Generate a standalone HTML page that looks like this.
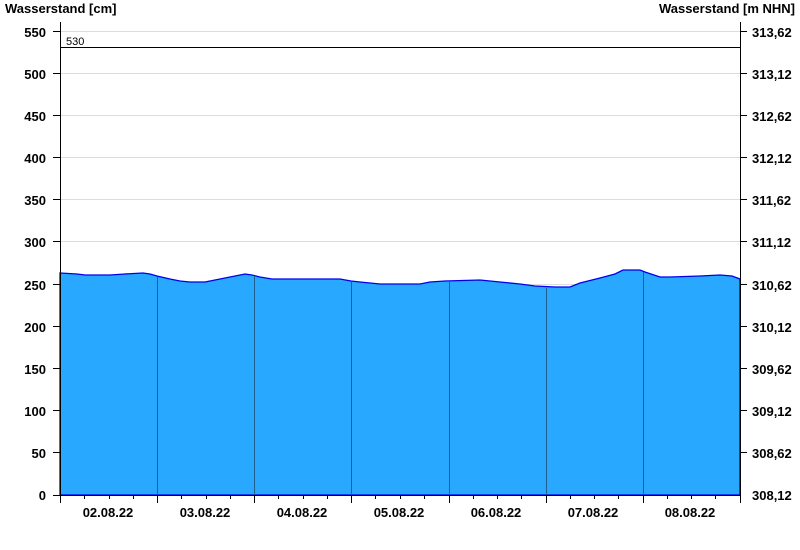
<!DOCTYPE html><html><head><style>body{margin:0;background:#fff}svg{display:block}text{font-family:"Liberation Sans",Arial,sans-serif;font-size:13px;font-weight:bold;fill:#000}</style></head><body>
<svg width="800" height="550" xmlns="http://www.w3.org/2000/svg">
<text x="5" y="13">Wasserstand [cm]</text>
<text x="795" y="13" text-anchor="end">Wasserstand [m NHN]</text>
<g stroke="#ddd" stroke-width="1">
<line x1="60" x2="740" y1="452.5" y2="452.5"/><line x1="60" x2="740" y1="410.5" y2="410.5"/><line x1="60" x2="740" y1="368.5" y2="368.5"/><line x1="60" x2="740" y1="326.5" y2="326.5"/><line x1="60" x2="740" y1="284.5" y2="284.5"/><line x1="60" x2="740" y1="241.5" y2="241.5"/><line x1="60" x2="740" y1="199.5" y2="199.5"/><line x1="60" x2="740" y1="157.5" y2="157.5"/><line x1="60" x2="740" y1="115.5" y2="115.5"/><line x1="60" x2="740" y1="73.5" y2="73.5"/><line x1="60" x2="740" y1="31.5" y2="31.5"/>
</g>
<path d="M60,273 L77,274 L85,275 L110,275 L125,274 L143,273 L150,274 L157,276 L170,279 L180,281 L190,282 L205,282 L215,280 L230,277 L245,274 L252,275 L260,277 L272,279 L340,279 L351,281 L360,282 L380,284 L420,284 L430,282 L445,281 L480,280 L500,282 L520,284 L535,286 L555,287 L570,287 L580,283 L600,278 L615,274 L623,270 L640,270 L645,272 L660,277 L670,277 L700,276 L720,275 L732,276 L740,279 L740,495 L60,495 Z" fill="#29a8ff" stroke="#0000ee" stroke-width="1.3"/>
<g stroke="#1d5f8f" stroke-width="1">
<line x1="157.5" x2="157.5" y1="277" y2="495"/><line x1="254.5" x2="254.5" y1="276" y2="495"/><line x1="351.5" x2="351.5" y1="282" y2="495"/><line x1="449.5" x2="449.5" y1="282" y2="495"/><line x1="546.5" x2="546.5" y1="288" y2="495"/><line x1="643.5" x2="643.5" y1="272" y2="495"/>
</g>
<line x1="60" x2="740" y1="47.5" y2="47.5" stroke="#000"/>
<text x="66" y="45" style="font-weight:normal;font-size:11px">530</text>
<g stroke="#000" stroke-width="1">
<line x1="60.5" x2="60.5" y1="22" y2="496"/><line x1="740.5" x2="740.5" y1="22" y2="496"/><line x1="53" x2="740" y1="495.5" y2="495.5"/>
<path d="M53,452.5h7M53,410.5h7M53,368.5h7M53,326.5h7M53,284.5h7M53,241.5h7M53,199.5h7M53,157.5h7M53,115.5h7M53,73.5h7M53,31.5h7"/>
<path d="M740,452.5h7M740,410.5h7M740,368.5h7M740,326.5h7M740,284.5h7M740,241.5h7M740,199.5h7M740,157.5h7M740,115.5h7M740,73.5h7M740,31.5h7"/>
<path d="M60.5,495v8M157.5,495v8M254.5,495v8M351.5,495v8M449.5,495v8M546.5,495v8M643.5,495v8M740.5,495v8"/>
<path d="M84.5,495v4M109.5,495v4M133.5,495v4M181.5,495v4M206.5,495v4M230.5,495v4M278.5,495v4M303.5,495v4M327.5,495v4M375.5,495v4M400.5,495v4M424.5,495v4M473.5,495v4M497.5,495v4M521.5,495v4M570.5,495v4M594.5,495v4M618.5,495v4M667.5,495v4M691.5,495v4M715.5,495v4"/>
</g>
<g text-anchor="end">
<text x="46" y="500">0</text><text x="46" y="458">50</text><text x="46" y="416">100</text><text x="46" y="374">150</text><text x="46" y="332">200</text><text x="46" y="290">250</text><text x="46" y="247">300</text><text x="46" y="205">350</text><text x="46" y="163">400</text><text x="46" y="121">450</text><text x="46" y="79">500</text><text x="46" y="37">550</text>
</g>
<g>
<text x="752" y="500">308,12</text><text x="752" y="458">308,62</text><text x="752" y="416">309,12</text><text x="752" y="374">309,62</text><text x="752" y="332">310,12</text><text x="752" y="290">310,62</text><text x="752" y="247">311,12</text><text x="752" y="205">311,62</text><text x="752" y="163">312,12</text><text x="752" y="121">312,62</text><text x="752" y="79">313,12</text><text x="752" y="37">313,62</text>
</g>
<g text-anchor="middle">
<text x="108" y="517">02.08.22</text><text x="205" y="517">03.08.22</text><text x="302" y="517">04.08.22</text><text x="399" y="517">05.08.22</text><text x="496" y="517">06.08.22</text><text x="593" y="517">07.08.22</text><text x="690" y="517">08.08.22</text>
</g>
</svg></body></html>
